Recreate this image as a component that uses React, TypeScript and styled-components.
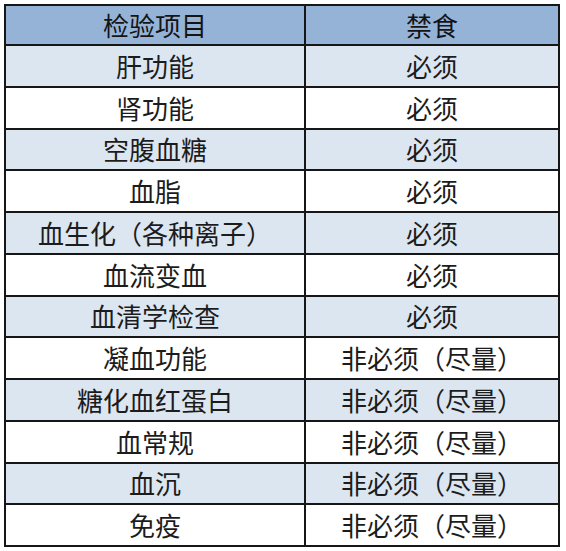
import styled, { createGlobalStyle } from 'styled-components';

const GlobalStyle = createGlobalStyle`
  html, body {
    margin: 0;
    padding: 0;
    background: #ffffff;
  }
  body {
    font-family: "Noto Sans CJK SC", "Noto Sans", sans-serif;
  }
`;

type Row = {
  item: string;
  fasting: string;
};

const rows: Row[] = [
  { item: '肝功能', fasting: '必须' },
  { item: '肾功能', fasting: '必须' },
  { item: '空腹血糖', fasting: '必须' },
  { item: '血脂', fasting: '必须' },
  { item: '血生化（各种离子）', fasting: '必须' },
  { item: '血流变血', fasting: '必须' },
  { item: '血清学检查', fasting: '必须' },
  { item: '凝血功能', fasting: '非必须（尽量）' },
  { item: '糖化血红蛋白', fasting: '非必须（尽量）' },
  { item: '血常规', fasting: '非必须（尽量）' },
  { item: '血沉', fasting: '非必须（尽量）' },
  { item: '免疫', fasting: '非必须（尽量）' },
];

const App = () => {
  return (
    <>
      <GlobalStyle />
      <Page>
        <Table>
          <HeadCell>检验项目</HeadCell>
          <HeadCell>禁食</HeadCell>
          {rows.map((r, i) => [
            <Cell key={`a${i}`} shaded={i % 2 === 0}>{r.item}</Cell>,
            <Cell key={`b${i}`} shaded={i % 2 === 0}>{r.fasting}</Cell>,
          ])}
        </Table>
      </Page>
    </>
  );
};

export default App;

const Page = styled.div`
  width: 566px;
  height: 551px;
  padding: 4px 0 0 4px;
  box-sizing: border-box;
`;

const Table = styled.div`
  display: grid;
  grid-template-columns: 298px 252px;
  grid-template-rows: 38px repeat(12, 39.75px);
  gap: 2px;
  padding: 2px;
  width: fit-content;
  background: #161616;
`;

const HeadCell = styled.div`
  display: flex;
  align-items: center;
  justify-content: center;
  background: #95b3d7;
  color: #141414;
  font-size: 26px;
  line-height: 1;
`;

const Cell = styled.div<{ shaded: boolean }>`
  display: flex;
  align-items: center;
  justify-content: center;
  background: ${({ shaded }) => (shaded ? '#dce6f1' : '#ffffff')};
  color: #1c1c1c;
  font-size: 26px;
  line-height: 1;
`;
